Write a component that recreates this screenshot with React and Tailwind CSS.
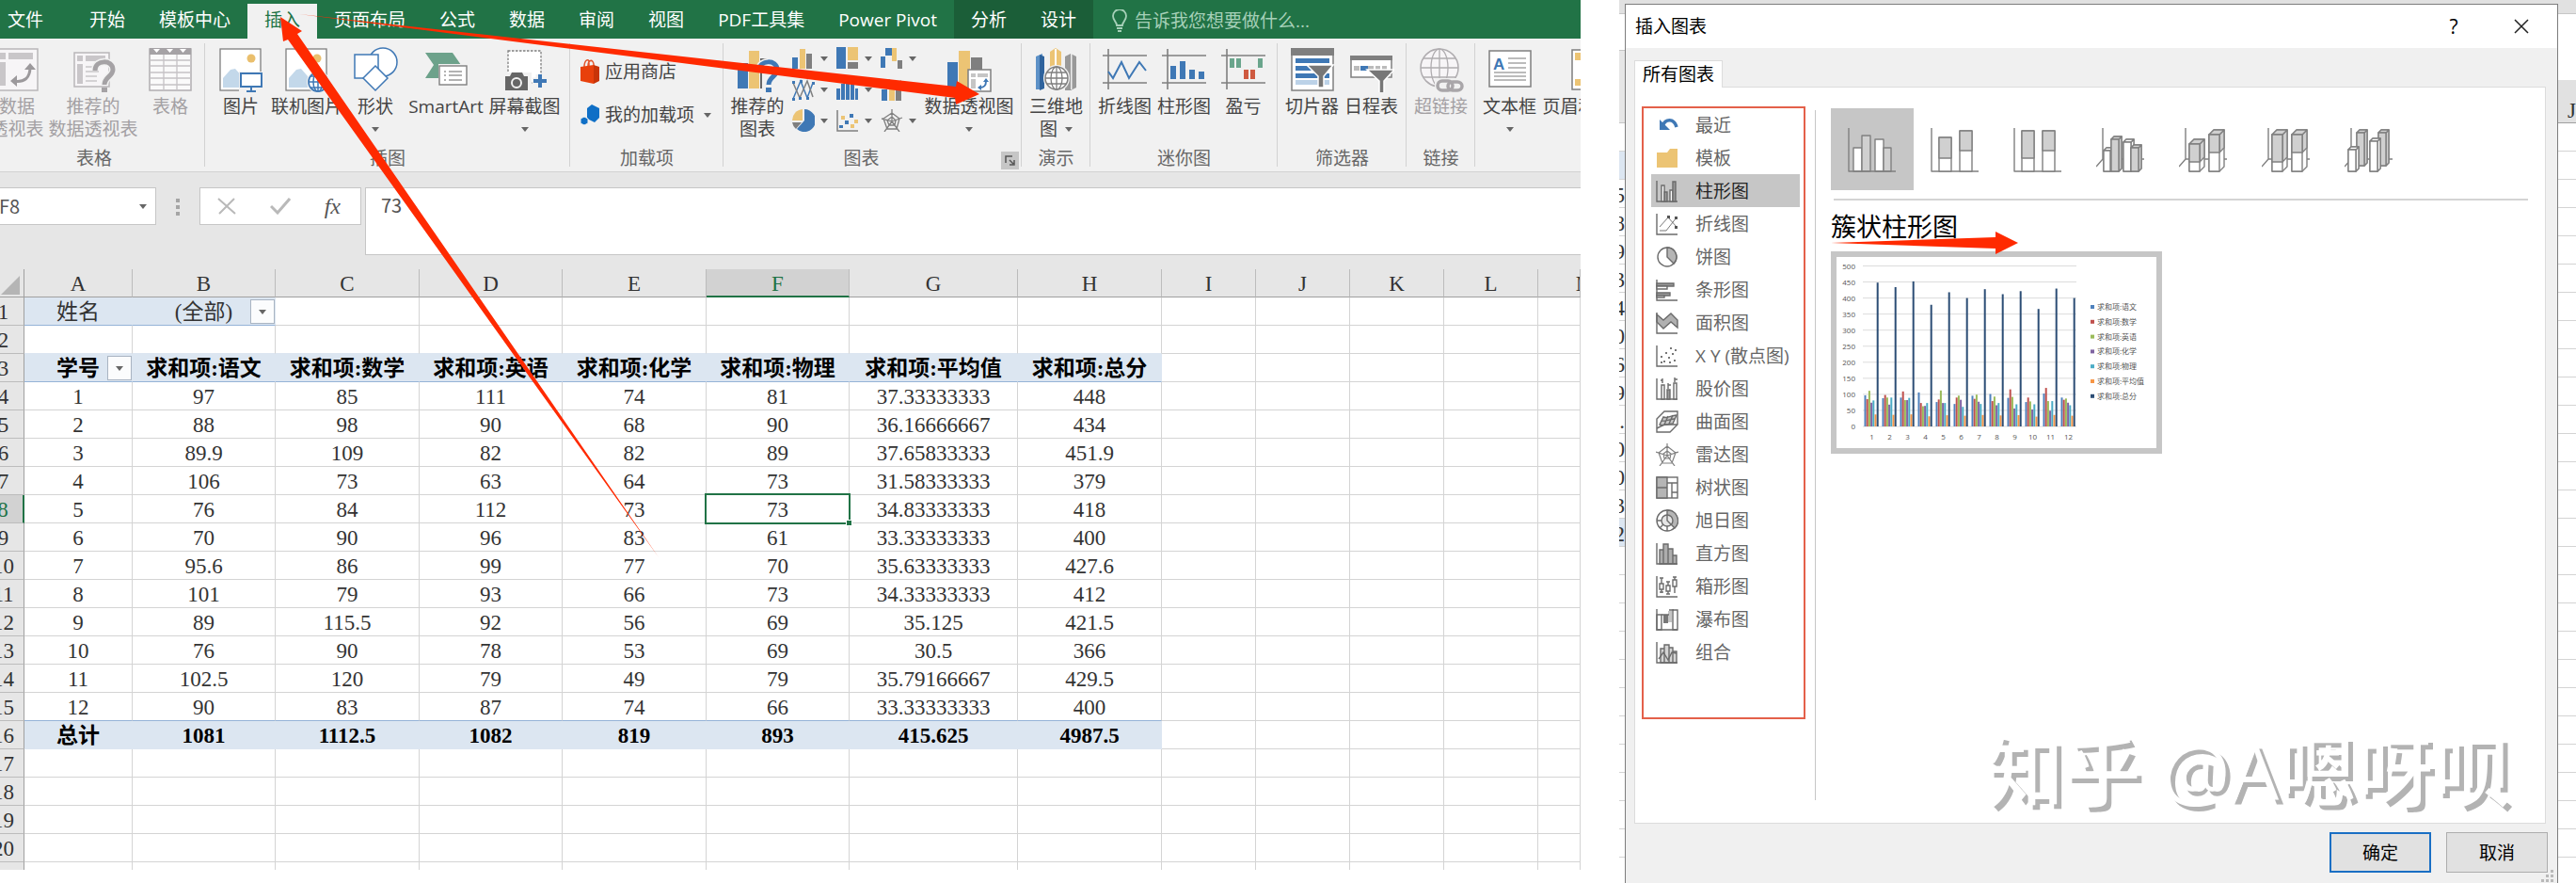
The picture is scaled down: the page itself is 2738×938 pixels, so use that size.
import React from "react";
import clsx from "clsx";

const BLUE = "#3f78b5";
const SAND = "#ecc474";
const GRAY = "#7f7f7f";

const tabs = ["开始", "模板中心", "插入", "页面布局", "公式", "数据", "审阅", "视图", "PDF工具集", "Power Pivot"];

const columns = [
  { id: "A", width: "w-[115px]" },
  { id: "B", width: "w-[152px]" },
  { id: "C", width: "w-[153px]" },
  { id: "D", width: "w-[152px]" },
  { id: "E", width: "w-[153px]" },
  { id: "F", width: "w-[152px]" },
  { id: "G", width: "w-[179px]" },
  { id: "H", width: "w-[153px]" },
  { id: "I", width: "w-[100px]" },
  { id: "J", width: "w-[100px]" },
  { id: "K", width: "w-[100px]" },
  { id: "L", width: "w-[100px]" },
  { id: "M", width: "w-auto" },
];

const scores = [
  [1, 97, 85, 111, 74, 81, "37.33333333", 448],
  [2, 88, 98, 90, 68, 90, "36.16666667", 434],
  [3, 89.9, 109, 82, 82, 89, "37.65833333", 451.9],
  [4, 106, 73, 63, 64, 73, "31.58333333", 379],
  [5, 76, 84, 112, 73, 73, "34.83333333", 418],
  [6, 70, 90, 96, 83, 61, "33.33333333", 400],
  [7, 95.6, 86, 99, 77, 70, "35.63333333", 427.6],
  [8, 101, 79, 93, 66, 73, "34.33333333", 412],
  [9, 89, 115.5, 92, 56, 69, "35.125", 421.5],
  [10, 76, 90, 78, 53, 69, "30.5", 366],
  [11, 102.5, 120, 79, 49, 79, "35.79166667", 429.5],
  [12, 90, 83, 87, 74, 66, "33.33333333", 400],
];

const fields = ["求和项:语文", "求和项:数学", "求和项:英语", "求和项:化学", "求和项:物理", "求和项:平均值", "求和项:总分"];

const rows = [
  ["姓名", "(全部)"],
  [],
  ["学号", ...fields],
  ...scores,
  ["总计", 1081, 1112.5, 1082, 819, 893, "415.625", 4987.5],
  [],
  [],
  [],
  [],
];

const seriesColors = ["#4f81bd", "#c0504d", "#9bbb59", "#8064a2", "#4bacc6", "#f79646", "#2c4d75"];

function Caret({ className }) {
  return (
    <svg width="8" height="5" viewBox="0 0 8 5" className={clsx("shrink-0", className)} aria-hidden="true">
      <path d="M0 0H8L4 5Z" fill="#666" />
    </svg>
  );
}

function Icon({ size = 48, children }) {
  return (
    <svg width={size} height={size} viewBox={`0 0 ${size} ${size}`} fill="none" className="shrink-0" aria-hidden="true">
      {children}
    </svg>
  );
}

/* ---------- ribbon icons ---------- */

const PivotTableIcon = () => (
  <Icon>
    <rect x="2" y="2" width="44" height="44" fill="#f7f5f7" stroke="#b9b6b9" strokeWidth="1.5" />
    <path d="M5 6h7v7H5zM15 6h26v7H15zM5 16h7v25H5z" fill="#c9c6c9" />
    <path d="M20 36c12 2 18-3 18-15" stroke="#9c999c" strokeWidth="3" />
    <path d="M32 24l6-7 6 7zM24 30l-7 6 7 6z" fill="#9c999c" />
  </Icon>
);

function HelpMark({ color }) {
  return (
    <>
      <path d="M26 24c1-11 19-11 19 0 0 7-9 8-9 16" stroke="#f1f1f1" strokeWidth="8" />
      <path d="M26 25c0-12 19-12 19-1 0 7-9 8-9 16" stroke={color} strokeWidth="5" />
      <path d="M33 43h6v5h-6z" fill={color} />
    </>
  );
}

const RecommendedPivotIcon = () => (
  <Icon>
    <rect x="4" y="6" width="37" height="36" fill="#f7f5f7" stroke="#b9b6b9" strokeWidth="1.5" />
    <path d="M7 9h6v6H7zM16 9h21v6H16zM7 18h6v21H7z" fill="#c9c6c9" />
    <path d="M16 21h14M16 26h14M16 31h12M16 36h12" stroke="#c9c6c9" strokeWidth="1.500" />
    <HelpMark color="#a5a2a5" />
  </Icon>
);

const TableIcon = () => (
  <Icon>
    <rect x="2" y="2" width="44" height="44" fill="#fafafa" stroke="#b0adb0" strokeWidth="1.5" />
    <path d="M2 1h44v7H2z" fill="#a5a2a5" />
    <path d="M6 2h7l-3.500 4zM20 2h7l-3.500 4zM34 2h7l-3.500 4z" fill="#fff" />
    <path d="M2 14h44M2 20h44M2 27h44M2 33h44M2 40h44M17 8v38M31 8v38" stroke="#c5c2c5" strokeWidth="1.300" />
  </Icon>
);

function Photo() {
  return (
    <>
      <rect x="2" y="2" width="43" height="44" fill="#fff" stroke={GRAY} strokeWidth="1.300" />
      <circle cx="35" cy="12" r="4.500" fill="#eabf6d" />
      <path d="M5 43V33l8-9 5-1 7 8v12z" fill="#c3d8ea" />
    </>
  );
}

const PictureIcon = () => (
  <Icon>
    <Photo />
    <path d="M22 26h26v22H22z" fill="#f1f1f1" />
    <rect x="24" y="28" width="22" height="14" fill="#fff" stroke={BLUE} strokeWidth="2" />
    <path d="M35 42v4M30 47h10" stroke={BLUE} strokeWidth="2" />
  </Icon>
);

const OnlinePictureIcon = () => (
  <Icon>
    <Photo />
    <circle cx="36" cy="37" r="12" fill="#f1f1f1" />
    <circle cx="36" cy="37" r="10" fill="#fff" />
    <path d="M26 37h20M36 27v20M28 31h16M28 43h16" stroke={BLUE} strokeWidth="1.500" />
    <circle cx="36" cy="37" r="10" stroke={BLUE} strokeWidth="1.700" />
    <ellipse cx="36" cy="37" rx="5" ry="10" stroke={BLUE} strokeWidth="1.500" />
  </Icon>
);

const ShapesIcon = () => (
  <Icon>
    <circle cx="32" cy="16" r="15" fill="#fff" stroke={BLUE} strokeWidth="1.500" />
    <rect x="2" y="8" width="25" height="25" fill="#fff" stroke={BLUE} strokeWidth="1.500" />
    <path d="M24 20l13 13-13 13-13-13z" fill="#fff" stroke={BLUE} strokeWidth="1.500" />
  </Icon>
);

const SmartArtIcon = () => (
  <Icon>
    <path d="M2 6h29l9 13-9 14H2l9-14z" fill="#6da28b" />
    <rect x="16" y="18" width="32" height="24" fill="#f1f1f1" />
    <rect x="17" y="20" width="29" height="20" fill="#fff" stroke={GRAY} strokeWidth="1.400" />
    <path d="M22 26h2M22 30h2M22 35h2M27 26h14M27 30h14M27 35h14" stroke="#999" strokeWidth="1.500" />
  </Icon>
);

const ScreenshotIcon = () => (
  <Icon>
    <rect x="6" y="4" width="35" height="34" fill="#fff" stroke={GRAY} strokeWidth="1.300" strokeDasharray="2.500 1.500" />
    <path d="M2 27h29v20H2z" fill="#f1f1f1" />
    <path d="M3 31h5l2-4h11l2 4h4v15H3z" fill="#666" />
    <circle cx="15" cy="38" r="5" stroke="#f1f1f1" strokeWidth="2" />
    <path d="M39 29v14M32 36h14" stroke="#f1f1f1" strokeWidth="7" />
    <path d="M40 29v14M33 36h14" stroke={BLUE} strokeWidth="4" />
  </Icon>
);

const StoreIcon = () => (
  <svg width="22" height="28" viewBox="0 0 22 28" fill="none" aria-hidden="true">
    <path d="M5 9C5 2 9 0 10 3v5M9 8c0-6 5-8 6-2v3" stroke="#e2542a" strokeWidth="1.500" />
    <path d="M1 9l14-2v20L1 24z" fill="#e8400c" />
    <path d="M15 7l6 2v15l-6 3z" fill="#c83408" />
  </svg>
);

const AddinIcon = () => (
  <svg width="22" height="24" viewBox="0 0 22 24" aria-hidden="true">
    <path d="M13 1l8 4v10l-5 5-8-4V5z" fill="#0f6fc6" />
    <path d="M5 14l4 2v5l-4 2-4-2v-5z" fill="#0f6fc6" stroke="#f1f1f1" />
  </svg>
);

const RecommendedChartIcon = () => (
  <Icon>
    <path d="M3 17h11v27H3z" fill={BLUE} />
    <path d="M15 4h11v40H15z" fill={SAND} />
    <path d="M27 12h11v3H27zM27 20h2v24h-2z" fill="#666" />
    <HelpMark color={BLUE} />
  </Icon>
);

const PivotChartIcon = () => (
  <Icon>
    <path d="M1 16h11v27H1z" fill={BLUE} />
    <path d="M13 4h12v39H13z" fill={SAND} />
    <path d="M26 11h12v14H26z" fill={GRAY} />
    <rect x="23" y="24" width="24" height="23" fill="#fff" stroke={GRAY} strokeWidth="1.500" />
    <path d="M26 28h5v4h-5zM33 28h11v4H33zM26 34h5v10h-5z" fill="#c5c5c5" />
    <path d="M35 43c6 0 7-3 7-7" stroke={BLUE} strokeWidth="2" />
    <path d="M39 37l3-4 3 4zM37 40l-4 3 4 3z" fill={BLUE} />
  </Icon>
);

const MapIcon = () => (
  <Icon>
    <path d="M2 10l7-3v38H2z" fill="#5d91c7" />
    <path d="M6 8l5 2v34l-5 2z" fill="#2f639d" />
    <path d="M17 5l6-4 6 4v38H17z" fill={SAND} />
    <path d="M22 2h2v26h-2z" fill="#fff" />
    <path d="M33 10l6-3 6 3v33l-6 3H33z" fill="#999" />
    <path d="M39 7h1.500v38H39z" fill="#eee" />
    <circle cx="24" cy="33" r="14" fill="#f1f1f1" />
    <circle cx="24" cy="33" r="12" fill="#fff" stroke={GRAY} strokeWidth="1.500" />
    <ellipse cx="24" cy="33" rx="6" ry="12" stroke={GRAY} strokeWidth="1.300" />
    <path d="M12 33h24M24 21v24M14 27h20M14 39h20" stroke={GRAY} strokeWidth="1.300" />
  </Icon>
);

const SparkFrame = () => <path d="M6 2v43M0 9h47M0 38h47" stroke={GRAY} strokeWidth="1.600" />;

const SparkLineIcon = () => (
  <Icon>
    <SparkFrame />
    <path d="M6 26l5 7 9-17 8 17 11-17 7 9" stroke={BLUE} strokeWidth="2" />
  </Icon>
);

const SparkColumnIcon = () => (
  <Icon>
    <SparkFrame />
    <path d="M9 20h6v14H9zM19 15h6v19h-6zM29 24h6v10h-6zM39 26h6v8h-6z" fill={BLUE} />
  </Icon>
);

const WinLossIcon = () => (
  <Icon>
    <SparkFrame />
    <path d="M9 12h5v10H9zM16 12h5v10h-5zM39 12h5v10h-5z" fill="#6aa58c" />
    <path d="M24 24h5v10h-5zM31 24h5v10h-5z" fill="#cf5a40" />
  </Icon>
);

const SlicerIcon = () => (
  <Icon>
    <rect x="2" y="2" width="44" height="44" fill="#fff" stroke={GRAY} strokeWidth="1.500" />
    <path d="M1 1h46v8H1z" fill={GRAY} />
    <path d="M6 12h36v5H6zM6 20h36v5H6zM6 28h36v5H6z" fill={BLUE} />
    <path d="M6 35h36v5H6z" fill="#bcd2e8" />
    <path d="M18 19h28L36 31v12h-6V31z" fill="#777" stroke="#fff" strokeWidth="1.500" />
  </Icon>
);

const TimelineIcon = () => (
  <Icon>
    <rect x="2" y="10" width="43" height="22" fill="#fff" stroke={GRAY} strokeWidth="1.500" />
    <path d="M1 9h45v5H1z" fill={GRAY} />
    <path d="M5 20h6v5H5zM20 20h6v5h-6zM28 20h5v5h-5zM35 20h5v5h-5z" fill="#bbb" />
    <path d="M12 20h8v5h-8z" fill={BLUE} />
    <path d="M19 24h29L37 36v13h-5V36z" fill="#777" stroke="#fff" strokeWidth="1.500" />
  </Icon>
);

const LinkIcon = () => (
  <Icon>
    <circle cx="22" cy="22" r="20" fill="#f7f5f7" stroke="#b0adb0" strokeWidth="1.500" />
    <ellipse cx="22" cy="22" rx="9" ry="20" stroke="#b0adb0" strokeWidth="1.300" />
    <path d="M2 22h40M22 2v40M5 12h34M5 32h34" stroke="#b0adb0" strokeWidth="1.300" />
    <path d="M17 33h32v16H17z" fill="#f1f1f1" />
    <rect x="20" y="36" width="16" height="10" rx="5" stroke="#a9a6a9" strokeWidth="3.500" />
    <rect x="31" y="37" width="15" height="9" rx="5" stroke="#a9a6a9" strokeWidth="3.500" />
  </Icon>
);

const TextBoxIcon = () => (
  <Icon>
    <rect x="2" y="4" width="44" height="38" fill="#fff" stroke={GRAY} strokeWidth="1.500" />
    <text x="6" y="24" fontSize="17" fontWeight="700" fill={BLUE} fontFamily="Liberation Sans, sans-serif">A</text>
    <path d="M22 12h19M22 17h19M22 22h19M7 27h34M7 31h34M7 35h34" stroke="#a5a5a5" strokeWidth="1.500" />
  </Icon>
);

const HeaderFooterIcon = () => (
  <Icon>
    <rect x="8" y="3" width="34" height="42" fill="#fff" stroke={GRAY} strokeWidth="1.500" />
    <path d="M11 6h28v8H11zM11 34h28v7H11z" fill={SAND} />
  </Icon>
);

const chartGallery = [
  {
    label: "柱形图",
    art: (
      <>
        <path d="M0 11h6v12H0z" fill={BLUE} />
        <path d="M8 2h6v21H8z" fill={SAND} />
        <path d="M15 7h6v16h-6z" fill={GRAY} />
      </>
    ),
  },
  {
    label: "层次结构图",
    art: (
      <>
        <path d="M0 0h10v23H0z" fill={BLUE} />
        <path d="M12 0h11v14H12z" fill={SAND} />
        <path d="M12 16h11v7H12z" fill={GRAY} />
      </>
    ),
  },
  {
    label: "瀑布图",
    art: (
      <>
        <path d="M0 10h5v12H0zM5 1h7v8H5z" fill={BLUE} />
        <path d="M12 1h5v14h-5z" fill={SAND} />
        <path d="M18 14h5v9h-5z" fill={GRAY} />
      </>
    ),
  },
  {
    label: "折线图",
    art: (
      <>
        <path d="M1 22L9 3l7 18 6-16" stroke={BLUE} strokeWidth="1.500" />
        <path d="M1 5l7 16L16 3l6 17" stroke={GRAY} strokeWidth="1.500" />
        <path d="M0 3h3v3H0zM8 2h3v3H8zM21 4h3v3h-3zM7 20h3v3H7zM15 20h3v3h-3zM0 21h3v3H0z" fill={BLUE} />
      </>
    ),
  },
  {
    label: "统计图表",
    art: <path d="M0 11h4v12H0zM5 6h4v17H5zM10 2h4v21h-4zM15 6h4v17h-4zM20 11h3v12h-3z" fill={BLUE} />,
  },
  {
    label: "组合图",
    art: (
      <>
        <path d="M1 12h6v12H1z" fill={BLUE} />
        <path d="M9 8h6v16H9z" fill={SAND} />
        <path d="M16 13h6v11h-6z" fill={GRAY} />
        <path d="M1 7l8-5 6 5 7-4" stroke={GRAY} strokeWidth="1.500" />
      </>
    ),
  },
  {
    label: "饼图",
    art: (
      <>
        <path d="M13 0a12 12 0 1 1-8 21l8-9z" fill={BLUE} />
        <path d="M11 0v12H0A12 12 0 0 1 11 0z" fill={SAND} />
        <path d="M0 14h10l-6 7a12 12 0 0 1-4-7z" fill={GRAY} />
      </>
    ),
  },
  {
    label: "散点图",
    art: (
      <>
        <path d="M1 1v22h22" stroke={GRAY} strokeWidth="1.500" />
        <path d="M14 5h4v4h-4zM9 12h4v4H9zM3 17h4v3H3z" fill={BLUE} />
        <path d="M5 7h4v4H5zM19 11h4v4h-4zM15 16h4v4h-4z" fill={SAND} />
      </>
    ),
  },
  {
    label: "雷达图",
    art: (
      <path
        d="M12 0v13L1 10M12 13l11-4M12 13L4 24M12 13l8 11M12 4l8 6-3 11H7L3 10zM12 8l4 4-1 5H9l-2-5z"
        stroke={GRAY}
        strokeWidth="1.300"
      />
    ),
  },
];

/* ---------- ribbon ---------- */

function RibbonButton({ icon, lines, width, caret, inlineCaret, disabled }) {
  return (
    <button
      type="button"
      disabled={disabled}
      className={clsx("flex shrink-0 flex-col items-center whitespace-nowrap", width, disabled ? "text-[#a3a0a3]" : "text-[#444]")}
    >
      {icon}
      <span className="mt-[3px]">{lines[0]}</span>
      {lines[1] && (
        <span className="flex items-center gap-2">
          {lines[1]}
          {inlineCaret && <Caret />}
        </span>
      )}
      {caret && <Caret className="mt-[10px]" />}
    </button>
  );
}

function RibbonGroup({ label, width, padding, launcher, children }) {
  return (
    <section className={clsx("relative flex shrink-0 flex-col justify-between", width)}>
      <div className={clsx("flex items-start pt-[9px]", padding)}>{children}</div>
      <div className={clsx("flex justify-center pb-[2px] text-[#666]", launcher && "pr-6")}>{label}</div>
      {launcher && (
        <button type="button" aria-label="查看所有图表" className="absolute right-[3px] bottom-[2px] flex h-[19px] w-[19px] items-center justify-center bg-[#c6c6c6]">
          <svg width="11" height="11" viewBox="0 0 11 11" fill="none" aria-hidden="true">
            <path d="M1 8V1h7M5 5l4 4M10 5v5H5" stroke="#555" strokeWidth="1.500" />
          </svg>
        </button>
      )}
      <div className="absolute top-[5px] right-0 bottom-[5px] w-px bg-[#d2d2d2]" />
    </section>
  );
}

function Ribbon() {
  return (
    <div className="-ml-[18px] flex h-[142px] border-b border-[#d2d2d2] bg-[#f1f1f1] text-[19px] leading-6">
      <RibbonGroup label="表格" width="w-[236px]" padding="pl-2">
        <RibbonButton disabled width="w-[56px]" icon={<PivotTableIcon />} lines={["数据", "透视表"]} />
        <RibbonButton disabled width="w-[106px]" icon={<RecommendedPivotIcon />} lines={["推荐的", "数据透视表"]} />
        <RibbonButton disabled width="w-[58px]" icon={<TableIcon />} lines={["表格"]} />
      </RibbonGroup>
      <RibbonGroup label="插图" width="w-[388px]" padding="pl-[10px]">
        <RibbonButton width="w-[56px]" icon={<PictureIcon />} lines={["图片"]} />
        <RibbonButton width="w-[84px]" icon={<OnlinePictureIcon />} lines={["联机图片"]} />
        <RibbonButton caret width="w-[62px]" icon={<ShapesIcon />} lines={["形状"]} />
        <RibbonButton width="w-[88px]" icon={<SmartArtIcon />} lines={["SmartArt"]} />
        <RibbonButton caret width="w-[79px]" icon={<ScreenshotIcon />} lines={["屏幕截图"]} />
      </RibbonGroup>
      <RibbonGroup label="加载项" width="w-[163px]" padding="pl-[10px]">
        <div className="flex flex-col gap-[18px] pt-3 text-[#444]">
          <button type="button" className="flex h-7 items-center gap-[5px]">
            <StoreIcon />
            应用商店
          </button>
          <button type="button" className="flex h-7 items-center gap-[5px]">
            <AddinIcon />
            我的加载项
            <Caret className="ml-[5px]" />
          </button>
        </div>
      </RibbonGroup>
      <RibbonGroup launcher label="图表" width="w-[317px]" padding="pl-[5px]">
        <RibbonButton width="w-[62px]" icon={<RecommendedChartIcon />} lines={["推荐的", "图表"]} />
        <div className="ml-[6px] grid grid-cols-3 gap-y-[9px]">
          {chartGallery.map((item) => (
            <button key={item.label} type="button" aria-label={item.label} className="flex w-[47px] items-center gap-[6px]">
              <Icon size={24}>{item.art}</Icon>
              <Caret />
            </button>
          ))}
        </div>
        <RibbonButton caret width="w-[94px]" icon={<PivotChartIcon />} lines={["数据透视图"]} />
      </RibbonGroup>
      <RibbonGroup label="演示" width="w-[73px]" padding="justify-center">
        <RibbonButton inlineCaret width="w-[60px]" icon={<MapIcon />} lines={["三维地", "图"]} />
      </RibbonGroup>
      <RibbonGroup label="迷你图" width="w-[199px]" padding="pl-[5px]">
        <RibbonButton width="w-[63px]" icon={<SparkLineIcon />} lines={["折线图"]} />
        <RibbonButton width="w-[63px]" icon={<SparkColumnIcon />} lines={["柱形图"]} />
        <RibbonButton width="w-[63px]" icon={<WinLossIcon />} lines={["盈亏"]} />
      </RibbonGroup>
      <RibbonGroup label="筛选器" width="w-[137px]" padding="pl-[5px]">
        <RibbonButton width="w-[63px]" icon={<SlicerIcon />} lines={["切片器"]} />
        <RibbonButton width="w-[63px]" icon={<TimelineIcon />} lines={["日程表"]} />
      </RibbonGroup>
      <RibbonGroup label="链接" width="w-[73px]" padding="justify-center">
        <RibbonButton disabled width="w-[60px]" icon={<LinkIcon />} lines={["超链接"]} />
      </RibbonGroup>
      <div className="flex items-start pt-[9px] pl-[5px]">
        <RibbonButton caret width="w-[63px]" icon={<TextBoxIcon />} lines={["文本框"]} />
        <RibbonButton width="w-[102px]" icon={<HeaderFooterIcon />} lines={["页眉和页脚"]} />
      </div>
    </div>
  );
}

function TabBar() {
  return (
    <nav className="flex h-[41px] items-end bg-[#217346] text-[19px] leading-6 text-white">
      <button type="button" className="h-[37px] w-[77px] pb-[3px] pl-2 text-left whitespace-nowrap">文件</button>
      {tabs.map((tab) => (
        <button
          key={tab}
          type="button"
          className={clsx("h-[37px] px-[18px] pb-[3px] whitespace-nowrap", tab === "插入" && "bg-[#f1f1f1] text-[#217346]")}
        >
          {tab}
        </button>
      ))}
      <div className="flex h-full items-end bg-[#1b5e38]">
        <button type="button" className="h-[37px] px-[18px] pb-[3px] whitespace-nowrap">分析</button>
        <button type="button" className="h-[37px] px-[18px] pb-[3px] whitespace-nowrap">设计</button>
      </div>
      <label className="flex h-[37px] items-center gap-2 pb-px pl-[20px]">
        <svg width="16" height="24" viewBox="0 0 16 24" fill="none" aria-hidden="true">
          <path d="M5 17c0-4-4-5-4-10a7 7 0 0 1 14 0c0 5-4 6-4 10zM5 20h6M6 23h4" stroke="#a6d0b8" strokeWidth="1.800" />
        </svg>
        <input
          type="text"
          aria-label="告诉我您想要做什么"
          placeholder="告诉我您想要做什么..."
          className="w-[220px] bg-transparent placeholder:text-[#a6d0b8] focus:outline-none"
        />
      </label>
    </nav>
  );
}

function FormulaBar() {
  return (
    <div className="flex items-start bg-[#e6e6e6] pt-4 pb-[15px] font-['Noto_Sans_CJK_SC',sans-serif] text-[20px] leading-6 text-[#555]">
      <div className="-ml-[18px] flex h-10 w-[184px] items-center border border-[#c6c6c6] bg-white pr-[9px]">
        <input type="text" aria-label="名称框" defaultValue="F8" className="w-full bg-transparent pl-[16px] focus:outline-none" />
        <Caret />
      </div>
      <svg width="4" height="18" viewBox="0 0 4 18" className="mx-[21px] mt-3" aria-hidden="true">
        <path d="M0 0h4v4H0zM0 7h4v4H0zM0 14h4v4H0z" fill="#a5a5a5" />
      </svg>
      <div className="flex h-10 w-[172px] items-center justify-between border border-[#c6c6c6] bg-white pr-[21px] pl-[18px]">
        <button type="button" aria-label="取消输入">
          <svg width="20" height="18" viewBox="0 0 20 18" fill="none" aria-hidden="true">
            <path d="M1 1l18 16M18 1L2 17" stroke="#b9b9b9" strokeWidth="2" />
          </svg>
        </button>
        <button type="button" aria-label="输入">
          <svg width="22" height="18" viewBox="0 0 22 18" fill="none" aria-hidden="true">
            <path d="M1 9l7 7L21 1" stroke="#b9b9b9" strokeWidth="3" />
          </svg>
        </button>
        <button type="button" className="font-['Liberation_Serif',serif] text-[24px] italic">fx</button>
      </div>
      <textarea
        aria-label="编辑栏"
        defaultValue="73"
        className="ml-1 h-[72px] flex-1 resize-none border border-r-0 border-[#c6c6c6] bg-white px-4 pt-[6px] focus:outline-none"
      />
    </div>
  );
}

/* ---------- worksheet ---------- */

function FilterButton({ label }) {
  return (
    <button
      type="button"
      aria-label={label}
      className="absolute top-[2px] right-0 flex h-[26px] w-[26px] items-center justify-center border border-[#a9b4c2] bg-[#fbfcfd]"
    >
      <Caret />
    </button>
  );
}

function Cell({ row, col, value }) {
  const band = row === 3 || row === 16;
  const filled = (band && col < 8) || (row === 1 && col < 2);
  const ruled = ((row === 3 || row === 15) && col < 8) || (row === 1 && col < 2);
  const plainBottom = (row === 2 || row === 16) && col < 8;
  const selected = row === 8 && col === 5;

  return (
    <td
      className={clsx(
        "relative h-[30px] border-r border-b p-0 pt-[3px] text-center whitespace-nowrap",
        filled ? "border-r-[#dce6f1] bg-[#dce6f1]" : "border-r-[#d4d4d4]",
        ruled ? "border-b-[#95b3d7]" : plainBottom ? "border-b-[#dce6f1]" : "border-b-[#d4d4d4]",
        band && "font-bold text-black"
      )}
    >
      {value}
      {row === 1 && col === 1 && <FilterButton label="筛选姓名" />}
      {row === 3 && col === 0 && <FilterButton label="筛选学号" />}
      {selected && (
        <div className="absolute -inset-[2px] z-10 border-[2px] border-[#217346]">
          <div className="absolute -right-1 -bottom-1 h-[7px] w-[7px] border border-white bg-[#217346]" />
        </div>
      )}
    </td>
  );
}

function Worksheet() {
  return (
    <div className="-ml-[18px]">
      <table className="w-full table-fixed border-separate border-spacing-0 font-['Liberation_Serif','Noto_Sans_CJK_SC',serif] text-[23px] leading-6 text-[#333]">
        <colgroup>
          <col className="w-[44px]" />
          {columns.map((column) => (
            <col key={column.id} className={column.width} />
          ))}
        </colgroup>
        <thead>
          <tr className="bg-[#e6e6e6]">
            <th className="h-[30px] border-r border-b border-[#a0a0a0] p-0" aria-label="全选">
              <svg width="20" height="20" viewBox="0 0 20 20" className="mt-1 mr-[4px] ml-auto" aria-hidden="true">
                <path d="M20 0v20H0z" fill="#b5b5b5" />
              </svg>
            </th>
            {columns.map((column) => (
              <th
                key={column.id}
                scope="col"
                className={clsx(
                  "h-[30px] overflow-hidden border-r border-r-[#bcbcbc] p-0 pt-[3px] font-normal",
                  column.id === "F" ? "border-b-2 border-b-[#217346] bg-[#d2d2d2] text-[#217346]" : "border-b border-b-[#a0a0a0]"
                )}
              >
                {column.id === "M" ? <div className="w-[100px]">{column.id}</div> : column.id}
              </th>
            ))}
          </tr>
        </thead>
        <tbody>
          {rows.map((row, index) => (
            <tr key={index}>
              <th
                scope="row"
                className={clsx(
                  "h-[30px] border-b border-b-[#bcbcbc] p-0 pt-[3px] font-normal",
                  index === 7
                    ? "border-r-2 border-r-[#217346] bg-[#d2d2d2] text-[#217346]"
                    : "border-r border-r-[#a0a0a0] bg-[#e6e6e6]"
                )}
              >
                {index + 1}
              </th>
              {columns.map((column, col) => (
                <Cell key={column.id} row={index + 1} col={col} value={row[col]} />
              ))}
            </tr>
          ))}
          <tr>
            <td className="h-2 border-r border-[#a0a0a0] bg-[#e6e6e6] p-0" />
            {columns.map((column) => (
              <td key={column.id} className="h-2 border-r border-[#d4d4d4] p-0" />
            ))}
          </tr>
        </tbody>
      </table>
    </div>
  );
}

/* ---------- insert chart dialog ---------- */

const line = { stroke: "#6b6b6b", strokeWidth: 1.4 };
const Axis = () => <path d="M1 1v22h22" {...line} />;

const categories = [
  {
    name: "最近",
    art: (
      <>
        <path d="M7 13C10 5 19 4 22 14" stroke={BLUE} strokeWidth="3.500" />
        <path d="M4 6v11h11z" fill={BLUE} />
      </>
    ),
  },
  {
    name: "模板",
    art: <path d="M1 6h11l3-4h8v20H1z" fill={SAND} />,
  },
  {
    name: "柱形图",
    art: (
      <>
        <Axis />
        <path d="M6 6h3v17H6zM15 11h3v12h-3z" fill="#fff" {...line} />
        <path d="M9 13h3v10H9zM18 2h3v21h-3z" fill="#999" {...line} />
      </>
    ),
  },
  {
    name: "折线图",
    art: (
      <>
        <Axis />
        <path d="M4 15l9-10 9 10M4 19h7l11-14" stroke="#777" />
        <path d="M12 3h3v3h-3zM20 14h3v3h-3zM20 4h3v3h-3z" fill="#555" />
      </>
    ),
  },
  {
    name: "饼图",
    art: (
      <>
        <circle cx="12" cy="12" r="10" fill="#fff" {...line} />
        <path d="M12 2a10 10 0 0 1 7 17l-7-7z" fill="#b5b5b5" {...line} />
      </>
    ),
  },
  {
    name: "条形图",
    art: (
      <>
        <Axis />
        <path d="M1 5h18v3H1zM1 15h14v3H1z" fill="#999" {...line} />
        <path d="M1 8h11v3H1zM1 18h8v2H1z" fill="#fff" {...line} />
      </>
    ),
  },
  {
    name: "面积图",
    art: (
      <>
        <path d="M1 3l7 6 8-7 7 7v8l-7-6-8 7-7-7z" fill="#b0b0b0" {...line} />
        <Axis />
      </>
    ),
  },
  {
    name: "X Y (散点图)",
    art: (
      <>
        <Axis />
        <path
          d="M5 12h2v2H5zM8 17h2v2H8zM10 8h2v2h-2zM13 13h2v2h-2zM15 3h2v2h-2zM17 9h2v2h-2zM20 5h2v2h-2zM19 16h2v2h-2zM5 18h2v2H5zM14 18h2v2h-2z"
          fill="#777"
        />
      </>
    ),
  },
  {
    name: "股价图",
    art: (
      <>
        <Axis />
        <path d="M6 8h3v15H6zM19 6h3v17h-3z" fill="#fff" {...line} />
        <path d="M12 13h3v10h-3z" fill="#999" {...line} />
        <path d="M7 1v5M13 6v6M20 0v5M5 3h2M13 8h3M20 2h3" {...line} />
      </>
    ),
  },
  {
    name: "曲面图",
    art: (
      <>
        <path d="M1 9l8-8h14v14l-8 8H1z" fill="#fff" {...line} />
        <path d="M4 15l4-8c5 2 8-2 14-2l-4 9c-5 0-9 3-14 1z" fill="#c9c9c9" {...line} />
        <path d="M1 19l8-4h14M9 15l4-9M14 14l4-9M6 11c5 1 9-2 14-2" {...line} />
      </>
    ),
  },
  {
    name: "雷达图",
    art: <path d="M12 0v13L0 9M12 13l12-4M12 13L4 24M12 13l8 11M12 3l9 7-4 11H7L3 10zM12 8l4 3-1 5H9l-1-5z" stroke="#808080" strokeWidth="1.200" />,
  },
  {
    name: "树状图",
    art: (
      <>
        <rect x="1" y="1" width="22" height="22" fill="#fff" {...line} />
        <path d="M1 1h11v22H1z" fill="#b5b5b5" {...line} />
        <path d="M1 12h11M12 7h11M17 7v16M17 17h6" {...line} />
      </>
    ),
  },
  {
    name: "旭日图",
    art: (
      <>
        <circle cx="12" cy="12" r="11" fill="#fff" {...line} />
        <path d="M12 1a11 11 0 0 1 8 19l-8-8z" fill="#b5b5b5" {...line} />
        <circle cx="12" cy="12" r="6" fill="#e5e5e5" {...line} />
        <path d="M12 6v6l4 4M1 12h5M4 20l4-4M12 18v5" {...line} />
      </>
    ),
  },
  {
    name: "直方图",
    art: (
      <>
        <path d="M4 8h4v15H4zM8 2h5v21H8zM13 7h5v16h-5zM18 14h4v9h-4z" fill="#adadad" {...line} />
        <Axis />
      </>
    ),
  },
  {
    name: "箱形图",
    art: (
      <>
        <Axis />
        <path d="M6 3v16M13 7v13M20 2v17M4 3h4M11 7h4M18 2h4M4 18h4M11 20h4" {...line} />
        <path d="M4 9h4v6H4zM11 11h4v6h-4zM18 5h4v7h-4z" fill="#fff" {...line} />
      </>
    ),
  },
  {
    name: "瀑布图",
    art: (
      <>
        <path d="M1 7h5v16H1zM18 2h5v21h-5z" fill="#fff" {...line} />
        <path d="M8 7h5v9H8z" fill="#777" />
        <path d="M13 3h4v12h-4z" fill="#c5c5c5" />
        <path d="M1 1v22h22M6 7h8M14 2h5" {...line} />
      </>
    ),
  },
  {
    name: "组合",
    art: (
      <>
        <path d="M5 8h4v15H5zM9 4h5v19H9zM14 7h4v16h-4zM18 11h4v12h-4z" fill="#d5d5d5" {...line} />
        <path d="M3 19l5-7 5 8 4-8 5 1" {...line} />
        <Axis />
      </>
    ),
  },
];

const stroke = { stroke: "#808080", strokeWidth: 1.4, strokeLinejoin: "round" };

function Bar({ x, w, top, split, fill = "#fff" }) {
  return (
    <>
      <rect x={x} y={top} width={w} height={47 - top} fill={fill} {...stroke} />
      {split && <rect x={x} y={top} width={w} height={split - top} fill="#d0d0d0" {...stroke} />}
    </>
  );
}

// A column with a side and a top face, d is the depth of the box
function Box({ x, w, top, bottom = 47, d = 4, split, fill = "#fff" }) {
  const face = split ? "#d0d0d0" : fill;
  return (
    <>
      <path d={`M${x} ${top}l${d} ${-d}h${w}v${bottom - top}l${-d} ${d}H${x}z`} fill="#fff" {...stroke} />
      <path d={`M${x + w} ${top}l${d} ${-d}v${(split || bottom) - top}l${-d} ${d}z`} fill={face} {...stroke} />
      <path d={`M${x} ${top}l${d} ${-d}h${w}l${-d} ${d}z`} fill={face} {...stroke} />
      <rect x={x} y={top} width={w} height={bottom - top} fill={split ? "#fff" : fill} {...stroke} />
      {split && <rect x={x} y={top} width={w} height={split - top} fill="#d0d0d0" {...stroke} />}
    </>
  );
}

const FlatAxis = () => <path d="M1 1v46h50" {...stroke} />;
const DeepAxis = () => <path d="M7 1v33L0 42M7 34h44" {...stroke} />;

const subtypes = [
  {
    name: "簇状柱形图",
    art: (
      <>
        <Bar x={6} w={9} top={22} />
        <Bar x={15} w={9} top={9} fill="#d0d0d0" />
        <Bar x={29} w={9} top={13} />
        <Bar x={38} w={8} top={22} fill="#d0d0d0" />
        <FlatAxis />
      </>
    ),
  },
  {
    name: "堆积柱形图",
    art: (
      <>
        <FlatAxis />
        <Bar x={9} w={13} top={11} split={33} />
        <Bar x={31} w={13} top={4} split={25} />
      </>
    ),
  },
  {
    name: "百分比堆积柱形图",
    art: (
      <>
        <FlatAxis />
        <Bar x={9} w={13} top={4} split={33} />
        <Bar x={31} w={13} top={4} split={25} />
      </>
    ),
  },
  {
    name: "三维簇状柱形图",
    art: (
      <>
        <DeepAxis />
        <Box x={8} w={7} top={25} d={3} />
        <Box x={16} w={8} top={13} d={3} fill="#d0d0d0" />
        <Box x={29} w={8} top={16} d={3} />
        <Box x={37} w={8} top={22} d={3} fill="#d0d0d0" />
      </>
    ),
  },
  {
    name: "三维堆积柱形图",
    art: (
      <>
        <DeepAxis />
        <Box x={11} w={11} top={18} d={5} split={37} />
        <Box x={32} w={11} top={8} d={5} split={27} />
      </>
    ),
  },
  {
    name: "三维百分比堆积柱形图",
    art: (
      <>
        <DeepAxis />
        <Box x={11} w={11} top={8} d={5} split={37} />
        <Box x={32} w={11} top={8} d={5} split={27} />
      </>
    ),
  },
  {
    name: "三维柱形图",
    art: (
      <>
        <DeepAxis />
        <Box x={13} w={8} top={6} bottom={41} d={3} fill="#d0d0d0" />
        <Box x={4} w={8} top={24} d={3} />
        <Box x={36} w={8} top={6} bottom={41} d={3} fill="#d0d0d0" />
        <Box x={27} w={8} top={15} d={3} />
      </>
    ),
  },
];

function ChartPreview() {
  const baseline = 180;
  const unit = 0.341;
  const step = 19;
  return (
    <svg width="340" height="203" viewBox="0 0 340 203" fontFamily="Open Sans, Noto Sans CJK SC, sans-serif" fontSize="8" fill="#555">
      {[0, 50, 100, 150, 200, 250, 300, 350, 400, 450, 500].map((tick) => (
        <g key={tick}>
          <path d={`M28 ${baseline - tick * unit}H255`} stroke="#dcdcdc" />
          <text x="20" y={baseline - tick * unit + 3} textAnchor="end">{tick}</text>
        </g>
      ))}
      {scores.map((row, i) => (
        <g key={row[0]}>
          {row.slice(1).map((value, s) => (
            <rect
              key={s}
              x={29.5 + i * step + s * 2.2}
              y={baseline - Number(value) * unit}
              width="2"
              height={Number(value) * unit}
              fill={seriesColors[s]}
            />
          ))}
          <text x={37.5 + i * step} y="194" textAnchor="middle">{row[0]}</text>
        </g>
      ))}
      {fields.map((field, i) => (
        <g key={field}>
          <rect x="270" y={51 + i * 15.8} width="4" height="4" fill={seriesColors[i]} />
          <text x="277" y={56 + i * 15.8}>{field}</text>
        </g>
      ))}
    </svg>
  );
}

function InsertChartDialog() {
  return (
    <div
      role="dialog"
      aria-label="插入图表"
      className="relative mt-1 flex min-w-0 flex-1 flex-col border border-b-0 border-[#7d7d7d] bg-[#f0f0f0] text-[19px] leading-6 text-black"
    >
      <header className="flex h-[46px] items-center bg-white pr-[30px] pl-[10px]">
        <h1 className="flex-1">插入图表</h1>
        <button type="button" aria-label="帮助" className="w-5 text-[21px]">?</button>
        <button type="button" aria-label="关闭" className="ml-[54px]">
          <svg width="16" height="16" viewBox="0 0 16 16" fill="none" aria-hidden="true">
            <path d="M1 1l14 14M15 1L1 15" stroke="#222" strokeWidth="1.500" />
          </svg>
        </button>
      </header>

      <div className="flex-1 pt-[13px] pr-3 pl-[9px]">
        <button type="button" className="relative z-10 -mb-px block h-[29px] border border-b-0 border-[#dcdcdc] bg-white px-2">
          所有图表
        </button>
        <div className="flex border border-[#dcdcdc] bg-white pt-[20px] pb-6 pl-[7px]">
          <aside className="mr-[10px] w-[174px] shrink-0">
            <ul className="mb-[86px] h-[651px] border-2 border-[#e4604a] pr-1 pl-2">
              {categories.map((item) => (
                <li key={item.name}>
                  <button
                    type="button"
                    className={clsx(
                      "flex h-[35px] w-full items-center gap-[18px] pl-[5px] whitespace-nowrap",
                      item.name === "柱形图" ? "bg-[#c6c6c6] text-[#262626]" : "text-[#666]"
                    )}
                  >
                    <Icon size={24}>{item.art}</Icon>
                    {item.name}
                  </button>
                </li>
              ))}
            </ul>
          </aside>
          <div className="mt-1 w-px shrink-0 bg-[#c6c6c6]" />
          <main className="min-w-0 flex-1 pt-[2px] pl-4">
            <div className="flex">
              {subtypes.map((item, index) => (
                <button
                  key={item.name}
                  type="button"
                  aria-label={item.name}
                  className={clsx("flex h-[87px] w-[88px] items-center justify-center", index === 0 && "bg-[#c6c6c6]")}
                >
                  <svg width="52" height="48" viewBox="0 0 52 48" fill="none" aria-hidden="true">
                    {item.art}
                  </svg>
                </button>
              ))}
            </div>
            <hr className="mt-[9px] mr-[18px] ml-[3px] border-t-2 border-[#d4d4d4]" />
            <div className="relative">
              <h2 className="pt-[10px] text-[27px] leading-[36px]">簇状柱形图</h2>
              <svg width="202" height="26" viewBox="0 0 202 26" className="absolute top-[32px] left-0" aria-hidden="true">
                <path d="M0 13L175 7V1l24 12-24 12v-6z" fill="#ff2a00" />
              </svg>
            </div>
            <div className="mt-2 h-[215px] w-[352px] border-[6px] border-[#c6c6c6] bg-white">
              <ChartPreview />
            </div>
          </main>
        </div>
        <footer className="flex justify-end gap-4 pt-[9px] pb-[11px]">
          <button type="button" className="h-[43px] w-[108px] border-2 border-[#1a6fc4] bg-[#e1e1e1]">确定</button>
          <button type="button" className="-mr-[2px] h-[43px] w-[108px] border border-[#adadad] bg-[#e1e1e1]">取消</button>
        </footer>
      </div>

      <svg width="14" height="14" viewBox="0 0 14 14" className="absolute right-[3px] bottom-0" aria-hidden="true">
        <path d="M10 0h3v3h-3zM5 5h3v3H5zM10 5h3v3h-3zM0 10h3v3H0zM5 10h3v3H5zM10 10h3v3h-3z" fill="#b9b9b9" />
      </svg>
      <div className="pointer-events-none absolute right-[50px] bottom-[72px] text-[82px] leading-[96px] font-medium whitespace-nowrap text-white [text-shadow:5px_5px_0_#b3b3b3]">
        知乎 @A嗯呀呗
      </div>
    </div>
  );
}

// Slivers of the workbook that stay visible on both sides of the dialog
function LeftSliver() {
  const values = ["", "", "5", "8", "9", "3", "4", "0", "6", "9", ".", "0", "0", "3", "2"];
  return (
    <div className="w-[6px] shrink-0 overflow-hidden bg-white font-['Liberation_Serif',serif] text-[23px] leading-[34px] text-[#333]">
      <div className="h-[14px] bg-[#e1e1e1]" />
      <div className="h-[39px] border-t border-[#c6c6c6]" />
      <div className="h-[78px] border-y border-[#c6c6c6] bg-[#e6e6e6]" />
      {values.map((value, index) => (
        <div
          key={index}
          className={clsx("flex h-[30px] justify-end border-b border-[#d4d4d4]", (index === 1 || index === 14) && "bg-[#dce6f1]")}
        >
          {value}
        </div>
      ))}
      {Array.from({ length: 11 }, (_, index) => (
        <div key={index} className="h-[30px] border-b border-[#d4d4d4]" />
      ))}
    </div>
  );
}

function RightSliver() {
  return (
    <div className="w-[19px] shrink-0 overflow-hidden bg-white font-['Liberation_Serif',serif] text-[23px] leading-6 text-[#333]">
      <div className="h-[14px] bg-[#e1e1e1]" />
      <div className="h-[71px] border-t border-[#c6c6c6]" />
      <div className="flex h-[46px] items-end justify-end border-b border-[#a0a0a0] bg-[#e1e1e1]">J</div>
      {Array.from({ length: 26 }, (_, index) => (
        <div key={index} className="h-[30px] border-b border-[#d4d4d4]" />
      ))}
    </div>
  );
}

export default function App() {
  return (
    <div className="grid grid-cols-[1680fr_41fr_1017fr] bg-white font-['Open_Sans','Noto_Sans_CJK_SC',sans-serif]">
      <div className="relative min-w-0 self-start overflow-hidden">
        <TabBar />
        <Ribbon />
        <FormulaBar />
        <Worksheet />
        <svg width="1100" height="620" viewBox="0 0 1100 620" className="pointer-events-none absolute top-0 left-0 z-20" aria-hidden="true">
          <path d="M298 18l23 15-5 3 384 556L306 42l-5 2z" fill="#ff2a00" />
          <path d="M318 15l698 77 1-6 24 14-25 11-1-7z" fill="#ff2a00" />
        </svg>
      </div>
      <div />
      <div className="relative flex min-w-0 overflow-hidden bg-[#e1e1e1]">
        <LeftSliver />
        <InsertChartDialog />
        <RightSliver />
      </div>
    </div>
  );
}
